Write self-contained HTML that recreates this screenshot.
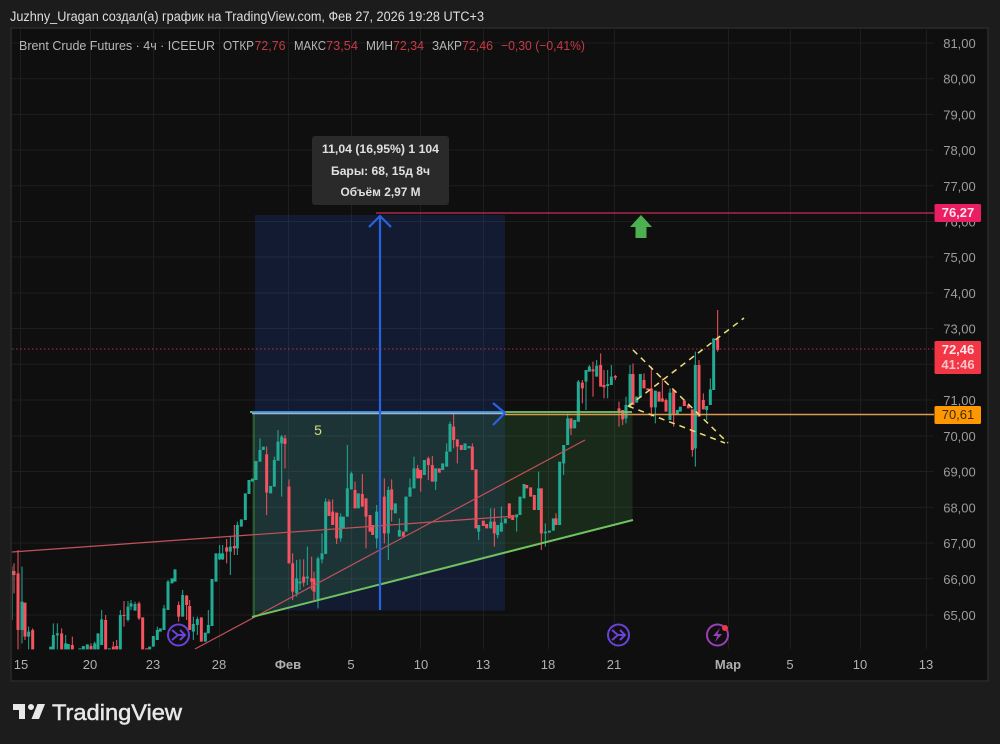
<!DOCTYPE html>
<html><head><meta charset="utf-8"><style>
html,body{margin:0;padding:0;background:#1c1c1c;width:1000px;height:744px;overflow:hidden}
svg{display:block;filter:blur(.35px)}
text{font-family:"Liberation Sans",sans-serif}
</style></head><body>
<svg width="1000" height="744" viewBox="0 0 1000 744" xmlns="http://www.w3.org/2000/svg">
<defs><clipPath id="c"><rect x="12" y="29" width="922" height="620.5"/></clipPath></defs>
<rect width="1000" height="744" fill="#1c1c1c"/>
<text x="10" y="21" font-size="13.5" fill="#dedede" textLength="474" lengthAdjust="spacingAndGlyphs">Juzhny_Uragan создал(а) график на TradingView.com, Фев 27, 2026 19:28 UTC+3</text>
<rect x="11" y="28" width="977" height="653" fill="#0f0f0f" stroke="#2a2a2a" stroke-width="1.5"/>
<path d="M12 43H934M12 78.7H934M12 114.4H934M12 150H934M12 185.8H934M12 221.5H934M12 257H934M12 293H934M12 328.5H934M12 364.3H934M12 400H934M12 436H934M12 471.5H934M12 507.4H934M12 543H934M12 578.8H934M12 615H934M20.500 29V649M90.500 29V649M153.500 29V649M219.500 29V649M288.500 29V649M351.500 29V649M420.500 29V649M483.500 29V649M548.500 29V649M614.500 29V649M728.500 29V649M790.500 29V649M860.500 29V649M926.500 29V649" stroke="#1e1e1e" fill="none"/>
<rect x="255" y="215" width="250" height="395.500" fill="#2962ff" fill-opacity=".15"/>
<path d="M252 412H632.500V520L252 617Z" fill="#55bb55" fill-opacity=".16"/>
<path d="M254 412V617" stroke="#3f8a4f" fill="none"/>
<g clip-path="url(#c)">
<g transform="translate(0 400) scale(.33333)" fill="none">
<path stroke="#22ab94" stroke-width="3" d="M36 500V660M66 500V730M86 680V748M160 670V748M172 670V748M197 705V748M284 725V748M305 630V735M361 630V748M384 603V665M393 600V630M405 605V632M472 680V720M492 615V690M504 540V630M548 570V650M580 650V720M592 650V705M625 630V700M659 435V480M668 435V480M691 410V525M712 365V465M780 115V185M823 170V260M834 90V182M845 105V290M890 480V590M900 478V570M922 440V555M954 470V625M966 400V490M977 295V462"/>
<path stroke="#22ab94" stroke-width="9" d="M66 605V690M86 695V710M152 740V748M160 705V748M172 700V706M197 730V748M205 732V748M240 745V748M250 738V748M262 733V748M284 730V748M294 700V748M305 658V735M328 745V748M361 645V748M384 620V660M393 610V620M405 612V632M449 740V748M460 708V740M472 690V720M481 685V695M492 625V690M504 545V630M516 535V550M525 508V545M548 585V650M580 672V695M592 657V675M616 698V725M625 675V700M636 537V678M648 460V545M659 460V478M668 460V478M691 440V455M712 375V445M724 358V380M736 280V360M747 240V282M757 236V245M768 183V240M780 150V185M790 140V150M812 258V280M823 180V260M834 125V182M845 110V130M890 535V580M900 545V550M922 530V535M954 475V600M966 460V478M977 305V462"/>
<path stroke="#f7525f" stroke-width="3" d="M42 490V580M54 450V748M75 608V720M98 685V748M185 685V748M217 710V748M273 730V748M317 645V748M340 725V748M350 720V748M372 603V680M417 605V660M536 605V665M560 585V660M569 600V690M680 417V490M703 375V465M800 140V345M855 105V205M867 238V490M878 460V600M911 478V560M935 470V570M942 515V600"/>
<path stroke="#f7525f" stroke-width="9" d="M42 513V525M54 520V690M75 608V710M98 690V748M185 700V748M217 735V748M273 738V748M317 660V748M340 740V748M350 738V748M372 645V648M417 610V655M428 652V748M440 745V748M536 615V650M560 587V615M569 618V690M604 652V725M680 442V455M703 438V445M800 163V278M855 115V132M867 260V490M878 490V575M911 530V548M935 535V545M942 535V575"/>
</g>
<g transform="translate(320 400) scale(.33333)" fill="none">
<path stroke="#22ab94" stroke-width="3" d="M62 340V425M82 135V350M94 215V268M170 315V445M205 260V480M238 355V410M270 235V290M282 170V265M347 205V270M380 130V200M390 65V155M476 375V420M512 325V385M533 375V415M544 320V395M590 343V395M656 215V330M676 370V440M731 135V225M743 40V135"/>
<path stroke="#22ab94" stroke-width="9" d="M62 350V415M70 350V385M82 265V350M94 220V268M115 280V325M170 335V415M205 270V400M226 310V340M238 390V410M258 290V395M270 262V290M282 205V265M313 180V225M347 205V245M368 190V210M380 155V200M390 72V155M435 130V150M447 138V145M476 375V395M512 365V385M533 375V405M544 368V395M556 355V370M590 343V352M600 290V345M612 252V295M656 265V330M676 395V400M688 392V398M700 355V392M719 185V375M731 135V190M743 55V135M764 60V85M775 0V65"/>
<path stroke="#f7525f" stroke-width="3" d="M27 298V348M38 298V375M50 340V432M105 245V325M127 222V320M138 295V445M193 235V430M215 238V365M293 195V235M302 210V275M325 170V240M337 168V245M401 40V145M412 118V190M457 130V210M523 325V440M664 265V450M708 340V375M753 55V105"/>
<path stroke="#f7525f" stroke-width="9" d="M27 305V348M38 335V375M50 338V415M105 270V325M127 282V320M138 295V350M150 345V395M158 375V405M193 290V400M215 268V330M250 395V410M293 205V235M302 210V235M325 175V195M337 195V245M358 205V218M401 80V120M412 118V140M424 135V150M457 140V210M468 208V385M490 362V378M500 372V385M523 365V400M568 310V355M578 345V360M620 255V265M632 262V290M643 285V330M664 265V400M708 355V375M753 55V85"/>
</g>
<g transform="translate(540 300) scale(.33333)" fill="none">
<path stroke="#22ab94" stroke-width="3" d="M115 240V365M138 210V330M148 195V215M170 180V230M203 210V295M214 195V255M258 290V370M270 195V320M301 222V292M346 272V370M390 265V360M466 155V500M500 318V360M511 235V315"/>
<path stroke="#22ab94" stroke-width="9" d="M115 245V365M138 210V245M148 200V215M170 197V230M203 252V258M214 230V255M258 315V355M270 222V320M290 290V308M301 222V292M346 272V322M390 278V360M412 330V345M421 320V335M466 195V445M500 318V330M511 268V315M521 115V270"/>
<path stroke="#f7525f" stroke-width="3" d="M127 240V310M159 185V290M182 160V260M192 210V295M226 225V240M237 305V380M248 330V375M279 190V315M312 220V265M334 200V350M367 235V305M378 295V335M401 270V380M457 328V470M477 180V350M490 280V328M533 30V155"/>
<path stroke="#f7525f" stroke-width="9" d="M127 248V265M159 208V214M182 195V260M192 255V262M226 228V233M237 325V335M248 330V358M279 222V315M312 240V265M323 265V270M334 265V322M357 275V305M367 295V305M378 300V335M401 270V345M433 302V318M445 315V325M457 328V450M477 195V350M490 300V328M533 115V150"/>
</g>
</g>
<g fill="none">
<path d="M12 552L516 516" stroke="#c4525a" stroke-width="1.200"/>
<path d="M195 649L585 440" stroke="#c0505a" stroke-width="1.200"/>
<path d="M252 617L633 520" stroke="#6fc25f" stroke-width="2"/>
<path d="M250 412H632" stroke="#74c56a" stroke-width="1.800"/>
<path d="M505 414.500H934" stroke="#dc9a50" stroke-width="1.500"/>
<path d="M252 413.500H505" stroke="#9fb4dc" stroke-width="1.500"/>
<path d="M252 411.800H505" stroke="#2f8fd8" stroke-width="1.500"/>
<path d="M380 610V216M369 227L380 216L391 227M493 403L505 413L493 425" stroke="#2962e0" stroke-width="2.200"/>
<path d="M376 213H934" stroke="#c92a56" stroke-width="1.300"/>
<path d="M12 349H934" stroke="#b03048" stroke-width="1" stroke-dasharray="1.500 2.500"/>
<path d="M628 406.500L744 318M633 350L728 443M628 406L725 443" stroke="#ecdf7c" stroke-width="1.500" stroke-dasharray="6 5"/>
</g>
<path d="M641 215L652 227H646.500V238H635.500V227H630Z" fill="#4caf50"/>
<text x="318" y="435" font-size="14" fill="#d3dc7c" text-anchor="middle" font-family="Liberation Serif">5</text>
<rect x="312" y="136" width="137" height="69" rx="3" fill="#2a2a2a"/>
<g font-size="12" fill="#e0e0e0" text-anchor="middle" font-weight="bold">
<text x="380.500" y="153" textLength="117" lengthAdjust="spacingAndGlyphs">11,04 (16,95%) 1 104</text>
<text x="380.500" y="175" textLength="99" lengthAdjust="spacingAndGlyphs">Бары: 68, 15д 8ч</text>
<text x="380.500" y="196" textLength="80" lengthAdjust="spacingAndGlyphs">Объём 2,97 М</text>
</g>
<g font-size="13" fill="#b8b8b8">
<text x="19" y="50" textLength="196" lengthAdjust="spacingAndGlyphs">Brent Crude Futures · 4ч · ICEEUR</text>
<text x="223" y="50" textLength="31" lengthAdjust="spacingAndGlyphs">ОТКР</text>
<text x="294" y="50" textLength="32" lengthAdjust="spacingAndGlyphs">МАКС</text>
<text x="366" y="50" textLength="27" lengthAdjust="spacingAndGlyphs">МИН</text>
<text x="432" y="50" textLength="30" lengthAdjust="spacingAndGlyphs">ЗАКР</text>
</g>
<g font-size="13" fill="#c83a46">
<text x="254.500" y="50" textLength="31" lengthAdjust="spacingAndGlyphs">72,76</text>
<text x="326" y="50" textLength="32" lengthAdjust="spacingAndGlyphs">73,54</text>
<text x="393" y="50" textLength="31" lengthAdjust="spacingAndGlyphs">72,34</text>
<text x="462" y="50" textLength="31" lengthAdjust="spacingAndGlyphs">72,46</text>
<text x="501" y="50" textLength="84" lengthAdjust="spacingAndGlyphs">−0,30 (−0,41%)</text>
</g>
<g font-size="13" fill="#9c9c9c" text-anchor="middle">
<text x="959.500" y="48">81,00</text><text x="959.500" y="83.700">80,00</text><text x="959.500" y="119.400">79,00</text><text x="959.500" y="155">78,00</text><text x="959.500" y="190.800">77,00</text><text x="959.500" y="226.500">76,00</text><text x="959.500" y="262">75,00</text><text x="959.500" y="298">74,00</text><text x="959.500" y="333.500">73,00</text><text x="959.500" y="405">71,00</text><text x="959.500" y="441">70,00</text><text x="959.500" y="476.500">69,00</text><text x="959.500" y="512.400">68,00</text><text x="959.500" y="548">67,00</text><text x="959.500" y="583.800">66,00</text><text x="959.500" y="620">65,00</text>
</g>
<rect x="934.500" y="204" width="46.500" height="18" rx="1.500" fill="#e91e63"/>
<rect x="934.500" y="341" width="46.500" height="33" rx="1.500" fill="#f23645"/>
<rect x="934.500" y="406" width="46.500" height="18" rx="1.500" fill="#ff9800"/>
<g font-size="13" text-anchor="middle">
<text x="958" y="217" fill="#fbe3eb" font-weight="bold">76,27</text>
<text x="958" y="354" fill="#fde6e8" font-weight="bold">72,46</text>
<text x="958" y="369" fill="#f8c3c8" font-weight="bold">41:46</text>
<text x="958" y="419" fill="#3a2a10">70,61</text>
</g>
<g font-size="13" fill="#b0b0b0" text-anchor="middle">
<text x="21" y="669">15</text><text x="90" y="669">20</text><text x="153" y="669">23</text><text x="219" y="669">28</text><text x="288" y="669" font-weight="bold">Фев</text><text x="351" y="669">5</text><text x="421" y="669">10</text><text x="483" y="669">13</text><text x="548" y="669">18</text><text x="614" y="669">21</text><text x="728" y="669" font-weight="bold">Мар</text><text x="790" y="669">5</text><text x="860" y="669">10</text><text x="926" y="669">13</text>
</g>
<g fill="none" stroke="#6a42d8" stroke-width="2">
<circle cx="178.500" cy="635" r="10.500"/>
<circle cx="618.500" cy="635" r="10.500"/>
<path d="M172 630L178 635H185M180 630L185 635L180 640M172 640L178 635"/>
<path d="M612 630L618 635H625M620 630L625 635L620 640M612 640L618 635"/>
</g>
<circle cx="717.500" cy="635" r="10.500" fill="none" stroke="#9a3fb8" stroke-width="2"/>
<path d="M720 628L713 636H717.500L715 642L722 634H717.500Z" fill="#9a3fb8"/>
<circle cx="725" cy="628" r="3" fill="#f23645"/>
<path transform="translate(11 698)" fill="#e8e8e8" d="M14 6H2v6h6v9h6V6Zm14 15h-7.500l6-15H34l-6 15ZM20 6a3 3 0 1 1 0 6 3 3 0 0 1 0-6Z"/>
<text x="52" y="720" font-size="22.500" fill="#e8e8e8" stroke="#e8e8e8" stroke-width=".5" textLength="130" lengthAdjust="spacingAndGlyphs">TradingView</text>
</svg>
</body></html>
